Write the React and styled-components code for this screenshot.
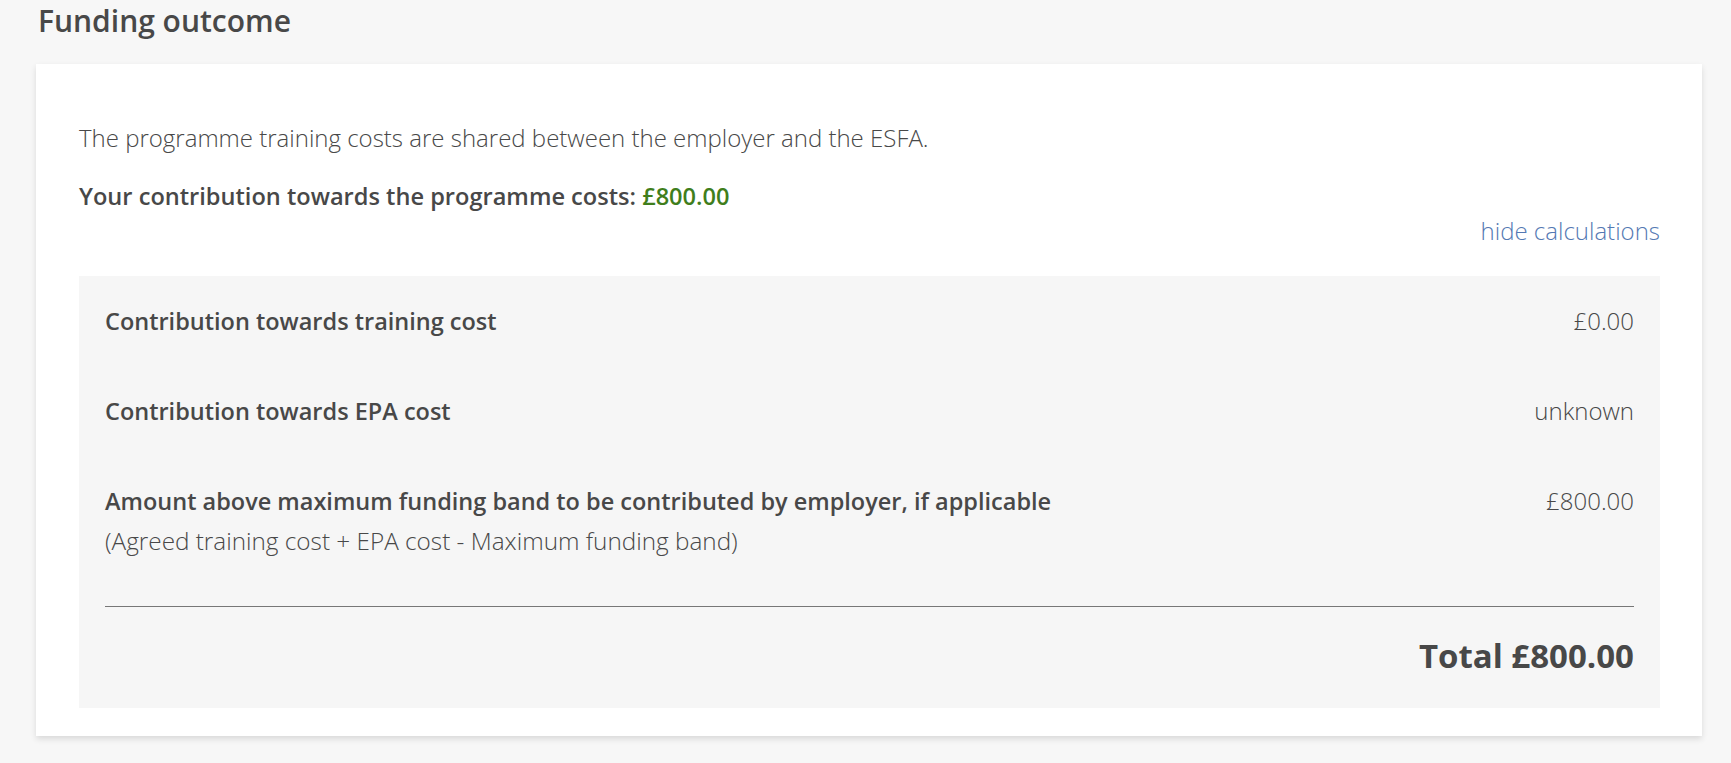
import React from 'react';
import styled, { createGlobalStyle } from "styled-components";

const GlobalStyle = createGlobalStyle`
  body {
    margin: 0;
    background: #f7f7f7;
    font-family: "Open Sans", Lato, sans-serif;
    color: #484848;
  }
`;

const rows = [
  { label: "Contribution towards training cost", value: "£0.00" },
  { label: "Contribution towards EPA cost", value: "unknown" },
  {
    label: "Amount above maximum funding band to be contributed by employer, if applicable",
    note: "(Agreed training cost + EPA cost - Maximum funding band)",
    value: "£800.00",
  },
];

const App = () => {
  return (
    <Page>
      <GlobalStyle />
      <Title>Funding outcome</Title>
      <Card>
        <Intro>The programme training costs are shared between the employer and the ESFA.</Intro>
        <Contribution>
          Your contribution towards the programme costs: <Amount>£800.00</Amount>
        </Contribution>
        <Toggle>
          <ToggleLink href="#">hide calculations</ToggleLink>
        </Toggle>
        <Breakdown>
          {rows.map((row) => (
            <Row key={row.label}>
              <Label>
                <LabelText>{row.label}</LabelText>
                {row.note && <Note>{row.note}</Note>}
              </Label>
              <Value>{row.value}</Value>
            </Row>
          ))}
          <Divider />
          <Total>Total £800.00</Total>
        </Breakdown>
      </Card>
    </Page>
  );
};

const Page = styled.div`
  padding: 0 29px 28px 36px;
`;
const Title = styled.h2`
  margin: 0;
  padding: 4px 0 0 2px;
  height: 60px;
  font-size: 30px;
  line-height: 34px;
  font-weight: 600;
  color: #484848;
`;
const Card = styled.div`
  background: #fff;
  box-shadow: 0 3px 6px rgba(0, 0, 0, 0.12);
  padding: 59px 42px 28px 43px;
`;
const Intro = styled.p`
  margin: 0;
  font-size: 24px;
  line-height: 30px;
  font-weight: 300;
`;
const Contribution = styled.p`
  margin: 28px 0 0;
  font-size: 23.6px;
  line-height: 30px;
  font-weight: 600;
`;
const Amount = styled.span`
  color: #3f7e1c;
`;
const Toggle = styled.div`
  display: flex;
  justify-content: flex-end;
  margin-top: 5px;
  line-height: 30px;
`;
const ToggleLink = styled.a`
  color: #5479b3;
  font-size: 24px;
  font-weight: 300;
  text-decoration: none;
`;
const Breakdown = styled.div`
  margin-top: 30px;
  background: #f6f6f6;
  padding: 0 26px 31px;
`;
const Row = styled.div`
  display: flex;
  justify-content: space-between;
  align-items: flex-start;
  padding: 30px 0;
  font-size: 23.5px;
  line-height: 30px;
`;
const Label = styled.div`
  display: flex;
  flex-direction: column;
  gap: 10px;
`;
const LabelText = styled.span`
  font-weight: 600;
`;
const Note = styled.span`
  font-size: 24.3px;
  font-weight: 300;
`;
const Value = styled.span`
  font-size: 24px;
  font-weight: 300;
`;
const Divider = styled.hr`
  margin: 20px 0 0;
  border: 0;
  border-top: 1px solid #777;
`;
const Total = styled.div`
  text-align: right;
  margin-top: 28px;
  font-size: 33px;
  line-height: 42px;
  font-weight: 700;
`;

export default App;
